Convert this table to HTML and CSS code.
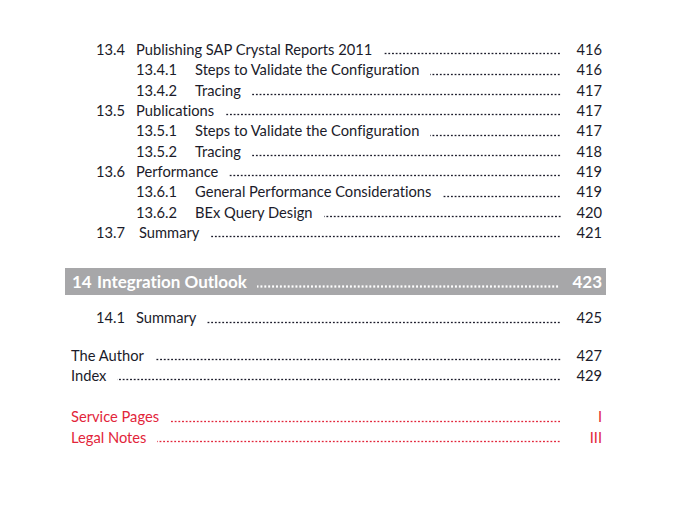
FILE: index.html
```html
<!DOCTYPE html>
<html lang="en">
<head>
<meta charset="utf-8">
<title>Contents</title>
<link rel="stylesheet" href="styles.css">
</head>
<body>
<div class="toc">
  <div class="group">
    <div class="row l1"><span class="num">13.4</span><span class="title">Publishing SAP Crystal Reports 2011</span><span class="dots"></span><span class="page">416</span></div>
    <div class="row l2"><span class="num">13.4.1</span><span class="title">Steps to Validate the Configuration</span><span class="dots"></span><span class="page">416</span></div>
    <div class="row l2"><span class="num">13.4.2</span><span class="title">Tracing</span><span class="dots"></span><span class="page">417</span></div>
    <div class="row l1"><span class="num">13.5</span><span class="title">Publications</span><span class="dots"></span><span class="page">417</span></div>
    <div class="row l2"><span class="num">13.5.1</span><span class="title">Steps to Validate the Configuration</span><span class="dots"></span><span class="page">417</span></div>
    <div class="row l2"><span class="num">13.5.2</span><span class="title">Tracing</span><span class="dots"></span><span class="page">418</span></div>
    <div class="row l1"><span class="num">13.6</span><span class="title">Performance</span><span class="dots"></span><span class="page">419</span></div>
    <div class="row l2"><span class="num">13.6.1</span><span class="title">General Performance Considerations</span><span class="dots"></span><span class="page">419</span></div>
    <div class="row l2"><span class="num">13.6.2</span><span class="title">BEx Query Design</span><span class="dots"></span><span class="page">420</span></div>
    <div class="row l1"><span class="num">13.7</span><span class="title shift">Summary</span><span class="dots"></span><span class="page">421</span></div>
  </div>

  <div class="chapter"><span class="cnum">14</span><span class="title">Integration Outlook</span><span class="dots"></span><span class="page">423</span></div>

  <div class="group">
    <div class="row l1"><span class="num">14.1</span><span class="title">Summary</span><span class="dots"></span><span class="page">425</span></div>
  </div>

  <div class="group back">
    <div class="row l0"><span class="title">The Author</span><span class="dots"></span><span class="page">427</span></div>
    <div class="row l0"><span class="title">Index</span><span class="dots"></span><span class="page">429</span></div>
  </div>

  <div class="group back red">
    <div class="row l0"><span class="title">Service Pages</span><span class="dots"></span><span class="page">I</span></div>
    <div class="row l0"><span class="title">Legal Notes</span><span class="dots"></span><span class="page">III</span></div>
  </div>
</div>
</body>
</html>
```

FILE: styles.css
```css
html, body {
  margin: 0;
  padding: 0;
  background: #ffffff;
}

body {
  font-family: "Lato", "Open Sans", sans-serif;
  font-size: 14.7px;
  color: #1b1b2a;
  font-variant-ligatures: none;
  font-feature-settings: "liga" 0, "clig" 0;
}

.toc {
  width: 541px;
  margin-left: 65px;
  padding-top: 39px;
}

.row {
  display: flex;
  align-items: center;
  height: 20.33px;
  white-space: nowrap;
}

.row .num {
  flex: none;
}

.l1 { padding-left: 31px; }
.l1 .num { width: 40px; }

.l2 { padding-left: 71px; }
.l2 .num { width: 59px; }

.l0 { padding-left: 6px; }

.title.shift { padding-left: 3px; }

.dots {
  flex: 1;
  align-self: stretch;
  margin-left: 11px;
  margin-right: 12px;
  background-image: radial-gradient(circle, #1b1b2a 0.85px, transparent 1.15px);
  background-size: 3.7px 3px;
  background-repeat: repeat-x;
  background-position: right 0 bottom 4px;
}

.page {
  flex: none;
  width: 29px;
  margin-right: 4px;
  text-align: right;
}

.chapter {
  display: flex;
  align-items: center;
  height: 27px;
  margin-top: 26px;
  margin-bottom: 12px;
  background: #a7a7a9;
  color: #ffffff;
  font-weight: 700;
  font-size: 17px;
  padding-left: 7px;
  white-space: nowrap;
}

.chapter .cnum {
  width: 25px;
}

.chapter .dots {
  margin-left: 10px;
  margin-right: 10px;
  background-image: radial-gradient(circle, #ffffff 1px, transparent 1.3px);
  background-size: 3.9px 3px;
  background-position: right 0 bottom 7px;
}

.chapter .page {
  width: 33px;
}

.back {
  margin-top: 17px;
}

.red {
  margin-top: 21px;
  color: #e2253a;
}

.red .dots {
  background-image: radial-gradient(circle, #e2253a 0.85px, transparent 1.15px);
}
```
